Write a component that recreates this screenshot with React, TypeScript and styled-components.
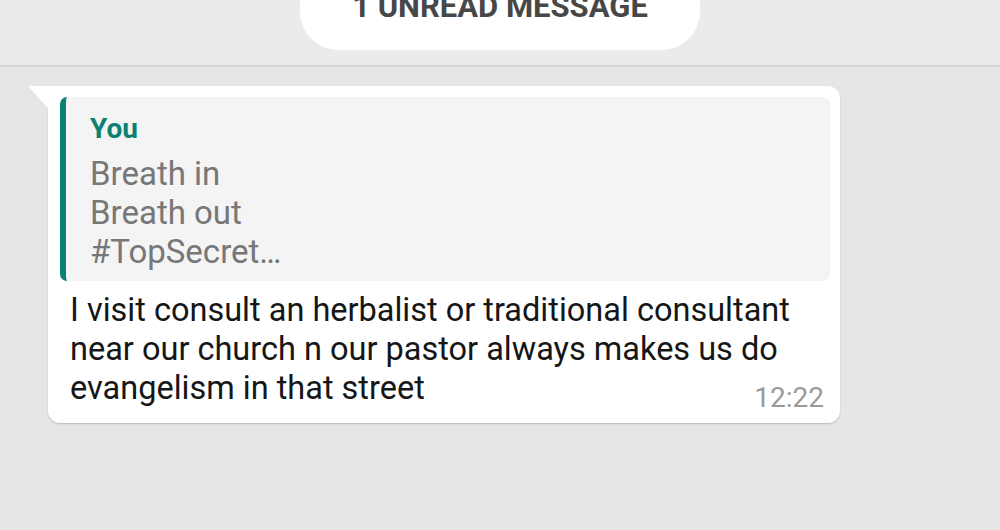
import styled, { createGlobalStyle } from "styled-components";

const GlobalStyle = createGlobalStyle`
  html, body {
    margin: 0;
    padding: 0;
    background: #e6e6e6;
    font-family: Roboto, "Noto Sans", sans-serif;
  }
`;

const Screen = styled.div`
  width: 1000px;
  height: 530px;
  overflow: hidden;
  background: #e6e6e6;
`;

const UnreadBar = styled.div`
  height: 67px;
  box-sizing: border-box;
  background: #ebebeb;
  border-bottom: 2px solid #d6d6d6;
  display: flex;
  justify-content: center;
  align-items: flex-end;
  padding-bottom: 15px;
`;

const UnreadPill = styled.div`
  width: 400px;
  height: 90px;
  box-sizing: border-box;
  background: #fff;
  border-radius: 38px;
  display: flex;
  justify-content: center;
  align-items: flex-end;
  padding-bottom: 28px;
  font-weight: 700;
  font-size: 31px;
  line-height: 1;
  color: #474747;
`;

const Messages = styled.div`
  padding: 19px 0 0 48px;
`;

const Bubble = styled.div`
  position: relative;
  width: 792px;
  box-sizing: border-box;
  background: #fff;
  border-radius: 0 12px 12px 12px;
  box-shadow: 0 1px 1.5px rgba(0, 0, 0, 0.2);
  padding: 11px 10px 15px 12px;

  &::before {
    content: "";
    position: absolute;
    left: -20px;
    top: 0;
    width: 0;
    height: 0;
    border-top: 22px solid #fff;
    border-left: 20px solid transparent;
  }
`;

const Quote = styled.div`
  background: #f4f4f4;
  border-radius: 7px;
  border-left: 6px solid #0a8271;
  padding: 15px 20px 12px 24px;
`;

const QuoteAuthor = styled.div`
  color: #0a8271;
  font-weight: 700;
  font-size: 28px;
  line-height: 34px;
  margin-bottom: 8px;
`;

const QuoteText = styled.div`
  color: #777;
  font-size: 33px;
  line-height: 39px;
  margin-bottom: -2px;
`;

const Body = styled.div`
  color: #161616;
  font-size: 32.5px;
  line-height: 39px;
  padding: 10px 0 0 10px;
`;

const Time = styled.span`
  float: right;
  color: #9a9a9a;
  font-size: 28px;
  line-height: 39px;
  margin-top: 9px;
  margin-right: 6px;
`;

export default function App() {
  return (
    <Screen>
      <GlobalStyle />
      <UnreadBar>
        <UnreadPill>1 UNREAD MESSAGE</UnreadPill>
      </UnreadBar>
      <Messages>
        <Bubble>
          <Quote>
            <QuoteAuthor>You</QuoteAuthor>
            <QuoteText>
              Breath in
              <br />
              Breath out
              <br />
              #TopSecret…
            </QuoteText>
          </Quote>
          <Body>
            I visit consult an herbalist or traditional consultant
            <br />
            near our church n our pastor always makes us do
            <br />
            evangelism in that street
            <Time>12:22</Time>
          </Body>
        </Bubble>
      </Messages>
    </Screen>
  );
}
